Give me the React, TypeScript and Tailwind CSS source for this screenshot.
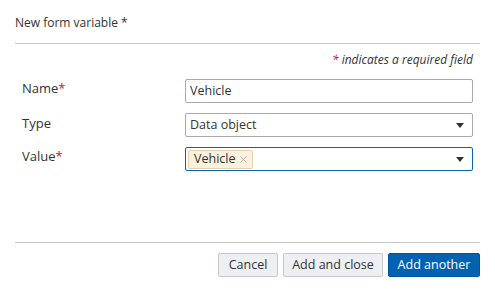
import { X } from "lucide-react";

function Caret() {
  return (
    <svg width="8" height="5" viewBox="0 0 8 5" className="shrink-0">
      <path d="M0 0h8L4 5z" fill="#333" />
    </svg>
  );
}

function Label({ text, required }: { text: string; required?: boolean }) {
  return (
    <div className="w-[170px] shrink-0 pl-[7px] text-[13px] leading-[18px] text-[#333]">
      {text}
      {required && <span className="text-[#c8102e]">*</span>}
    </div>
  );
}

export default function App() {
  return (
    <div className="h-[292px] w-[495px] bg-white font-['Open_Sans',sans-serif] text-[#333]">
      <div className="pl-[15px] pr-[15px]">
        <div className="flex h-[43px] items-center pt-[2px] text-[12px]">New form variable *</div>
        <div className="h-px bg-[#c8c8c8]" />
        <p className="mt-[7px] pr-[7px] text-right text-[12px] italic leading-[18px] text-[#333]">
          <span className="text-[#c8102e]">*</span> indicates a required field
        </p>

        <div className="mt-[10px] flex flex-col gap-[10px]">
          <div className="flex items-start">
            <Label text="Name" required />
            <div className="flex h-[24px] w-[288px] items-center rounded-[2px] border border-[#aaa] px-[4px] text-[12.5px]">
              Vehicle
            </div>
          </div>
          <div className="flex items-start">
            <div className="pt-[1px]"><Label text="Type" /></div>
            <div className="flex h-[24px] w-[288px] items-center justify-between rounded-[2px] border border-[#aaa] pl-[4px] pr-[8px] text-[12.5px]">
              Data object
              <Caret />
            </div>
          </div>
          <div className="flex items-start">
            <Label text="Value" required />
            <div className="flex h-[24px] w-[288px] items-center justify-between rounded-[2px] border border-[#0a64b4] pl-[2px] pr-[8px] text-[12.5px]">
              <span className="flex h-[19px] items-center gap-[3px] rounded-[2px] border border-[#e2d3ad] bg-[#fcf1dc] pl-[5px] pr-[3px]">
                Vehicle
                <X size={11} strokeWidth={1.5} className="text-[#999]" />
              </span>
              <Caret />
            </div>
          </div>
        </div>

        <div className="mt-[71px] h-px bg-[#c8c8c8]" />
        <div className="mt-[10px] flex justify-end gap-[5px]">
          <button className="h-[24px] w-[60px] rounded-[2px] border border-[#c8c8c8] bg-[#eeeff3] text-[12.5px] text-[#333]">
            Cancel
          </button>
          <button className="h-[24px] w-[100px] rounded-[2px] border border-[#c8c8c8] bg-[#eeeff3] text-[12.5px] text-[#333]">
            Add and close
          </button>
          <button className="h-[24px] w-[92px] rounded-[2px] border border-[#00569e] bg-[#0062b1] text-[12.5px] text-white">
            Add another
          </button>
        </div>
      </div>
    </div>
  );
}
